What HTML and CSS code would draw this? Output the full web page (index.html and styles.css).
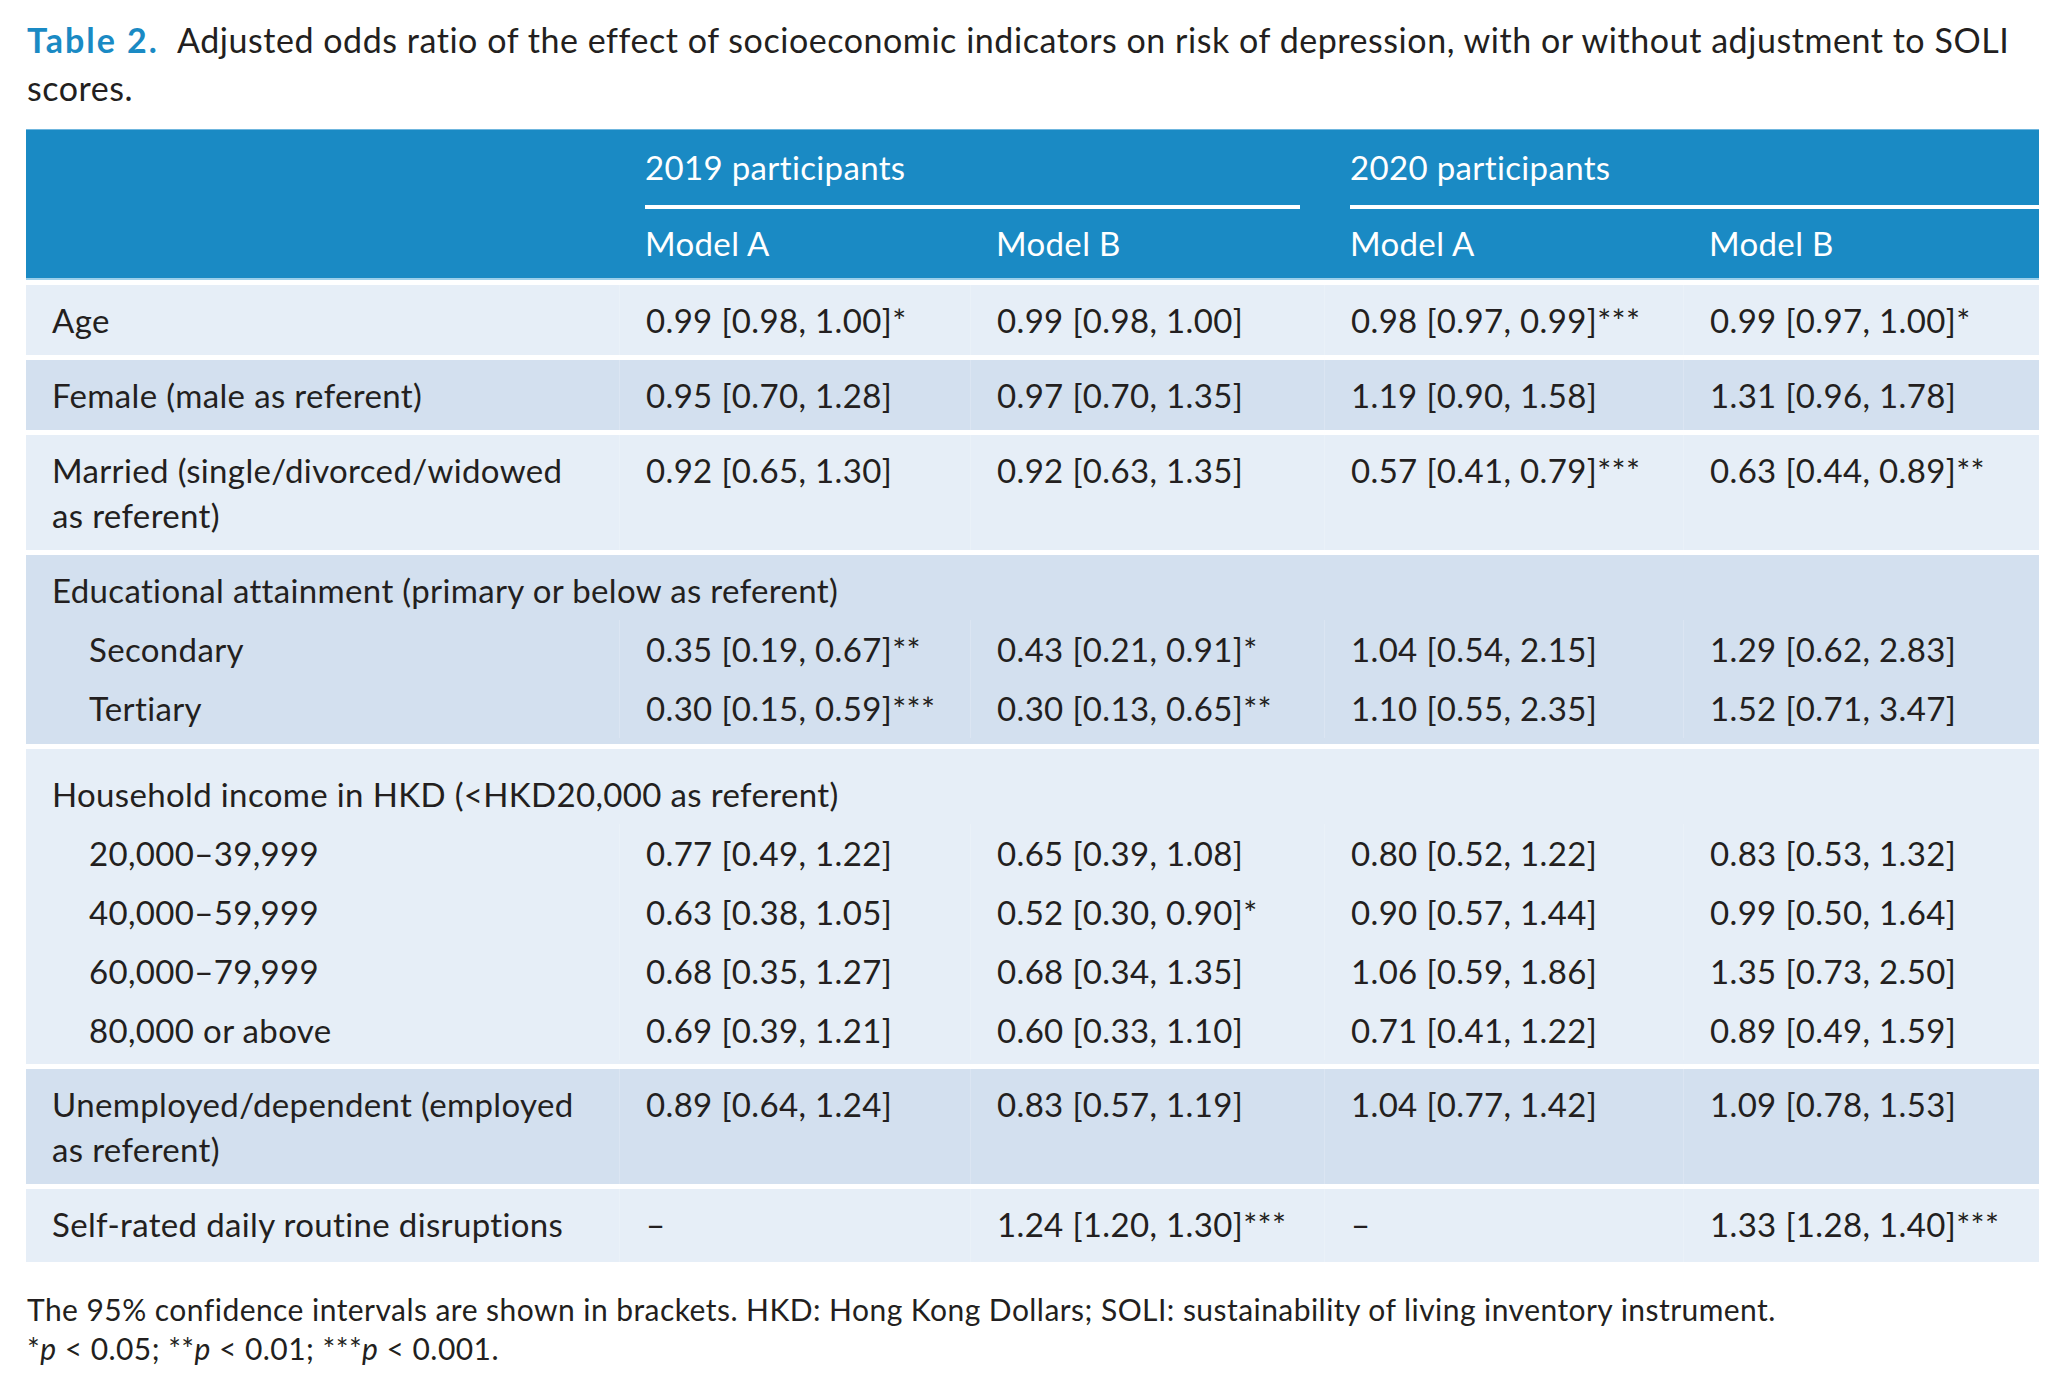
FILE: index.html
```html
<!DOCTYPE html>
<html lang="en">
<head>
<meta charset="utf-8">
<title>Table 2</title>
<link rel="stylesheet" href="styles.css">
</head>
<body>
<div class="page">
  <p class="caption"><span class="cap-label">Table 2.</span> Adjusted odds ratio of the effect of socioeconomic indicators on risk of depression, with or without adjustment to SOLI<br>scores.</p>

  <div class="tbl">
    <div class="thead">
      <div class="hrow hrow-top">
        <div class="hcell"></div>
        <div class="hcell span2 grp-a"><div class="hline">2019 participants</div></div>
        <div class="hcell span2 grp-b"><div class="hline">2020 participants</div></div>
      </div>
      <div class="hrow hrow-bottom">
        <div class="hcell"></div>
        <div class="hcell">Model A</div>
        <div class="hcell">Model B</div>
        <div class="hcell">Model A</div>
        <div class="hcell">Model B</div>
      </div>
    </div>

    <div class="grp light single">
      <div class="row">
        <div class="cell lbl">Age</div>
        <div class="cell">0.99 [0.98, 1.00]*</div>
        <div class="cell">0.99 [0.98, 1.00]</div>
        <div class="cell">0.98 [0.97, 0.99]***</div>
        <div class="cell">0.99 [0.97, 1.00]*</div>
      </div>
    </div>

    <div class="grp dark single">
      <div class="row">
        <div class="cell lbl">Female (male as referent)</div>
        <div class="cell">0.95 [0.70, 1.28]</div>
        <div class="cell">0.97 [0.70, 1.35]</div>
        <div class="cell">1.19 [0.90, 1.58]</div>
        <div class="cell">1.31 [0.96, 1.78]</div>
      </div>
    </div>

    <div class="grp light single">
      <div class="row">
        <div class="cell lbl">Married (single/divorced/widowed<br>as referent)</div>
        <div class="cell">0.92 [0.65, 1.30]</div>
        <div class="cell">0.92 [0.63, 1.35]</div>
        <div class="cell">0.57 [0.41, 0.79]***</div>
        <div class="cell">0.63 [0.44, 0.89]**</div>
      </div>
    </div>

    <div class="grp dark multi edu">
      <div class="row">
        <div class="cell lbl full">Educational attainment (primary or below as referent)</div>
      </div>
      <div class="row">
        <div class="cell lbl sub">Secondary</div>
        <div class="cell">0.35 [0.19, 0.67]**</div>
        <div class="cell">0.43 [0.21, 0.91]*</div>
        <div class="cell">1.04 [0.54, 2.15]</div>
        <div class="cell">1.29 [0.62, 2.83]</div>
      </div>
      <div class="row">
        <div class="cell lbl sub">Tertiary</div>
        <div class="cell">0.30 [0.15, 0.59]***</div>
        <div class="cell">0.30 [0.13, 0.65]**</div>
        <div class="cell">1.10 [0.55, 2.35]</div>
        <div class="cell">1.52 [0.71, 3.47]</div>
      </div>
    </div>

    <div class="grp light multi inc">
      <div class="row">
        <div class="cell lbl full">Household income in HKD (&lt;HKD20,000 as referent)</div>
      </div>
      <div class="row">
        <div class="cell lbl sub">20,000–39,999</div>
        <div class="cell">0.77 [0.49, 1.22]</div>
        <div class="cell">0.65 [0.39, 1.08]</div>
        <div class="cell">0.80 [0.52, 1.22]</div>
        <div class="cell">0.83 [0.53, 1.32]</div>
      </div>
      <div class="row">
        <div class="cell lbl sub">40,000–59,999</div>
        <div class="cell">0.63 [0.38, 1.05]</div>
        <div class="cell">0.52 [0.30, 0.90]*</div>
        <div class="cell">0.90 [0.57, 1.44]</div>
        <div class="cell">0.99 [0.50, 1.64]</div>
      </div>
      <div class="row">
        <div class="cell lbl sub">60,000–79,999</div>
        <div class="cell">0.68 [0.35, 1.27]</div>
        <div class="cell">0.68 [0.34, 1.35]</div>
        <div class="cell">1.06 [0.59, 1.86]</div>
        <div class="cell">1.35 [0.73, 2.50]</div>
      </div>
      <div class="row">
        <div class="cell lbl sub">80,000 or above</div>
        <div class="cell">0.69 [0.39, 1.21]</div>
        <div class="cell">0.60 [0.33, 1.10]</div>
        <div class="cell">0.71 [0.41, 1.22]</div>
        <div class="cell">0.89 [0.49, 1.59]</div>
      </div>
    </div>

    <div class="grp dark single">
      <div class="row">
        <div class="cell lbl">Unemployed/dependent (employed<br>as referent)</div>
        <div class="cell">0.89 [0.64, 1.24]</div>
        <div class="cell">0.83 [0.57, 1.19]</div>
        <div class="cell">1.04 [0.77, 1.42]</div>
        <div class="cell">1.09 [0.78, 1.53]</div>
      </div>
    </div>

    <div class="grp light single last">
      <div class="row">
        <div class="cell lbl">Self-rated daily routine disruptions</div>
        <div class="cell">–</div>
        <div class="cell">1.24 [1.20, 1.30]***</div>
        <div class="cell">–</div>
        <div class="cell">1.33 [1.28, 1.40]***</div>
      </div>
    </div>
  </div>

  <div class="notes">
    <p>The 95% confidence intervals are shown in brackets. HKD: Hong Kong Dollars; SOLI: sustainability of living inventory instrument.</p>
    <p>*<i>p</i> &lt; 0.05; **<i>p</i> &lt; 0.01; ***<i>p</i> &lt; 0.001.</p>
  </div>
</div>
</body>
</html>
```

FILE: styles.css
```css
html, body {
  margin: 0;
  padding: 0;
  background: #ffffff;
}

body {
  font-family: "Lato", "Liberation Sans", sans-serif;
  color: #231f20;
  font-size: 33px;
  letter-spacing: 0.35px;
}

.page {
  padding: 16px 26px 0 26px;
  width: 2013px;
}

.caption {
  margin: 0 0 17px 1px;
  line-height: 48px;
  font-size: 34px;
  letter-spacing: 0.55px;
  white-space: nowrap;
}

.cap-label {
  color: #1a8ac4;
  font-weight: 700;
  letter-spacing: 2px;
  margin-right: 10px;
}

.tbl {
  display: flex;
  flex-direction: column;
  gap: 5px;
}

.thead {
  background: #1a8ac4;
  color: #ffffff;
  border-top: 1px solid #6fb6de;
  border-bottom: 2px solid #9ccfea;
}

.hrow,
.row {
  display: grid;
  grid-template-columns: 593px 351px 354px 359px 356px;
}

.hcell {
  line-height: 45px;
  padding-left: 26px;
}

.hrow-top .hcell {
  padding-top: 15px;
}

.span2 {
  grid-column: span 2;
}

.grp-a {
  padding-right: 24px;
}

.hline {
  border-bottom: 4px solid #ffffff;
  padding-bottom: 15px;
}

.hrow-bottom .hcell {
  padding-top: 12px;
  padding-bottom: 12px;
}

.grp.light {
  background: #e6eef7;
}

.grp.dark {
  background: #d3e0ef;
}

.cell {
  line-height: 45px;
  padding-left: 26px;
  white-space: nowrap;
  border-left: 1px solid rgba(255, 255, 255, 0.18);
}

.cell.lbl {
  border-left: none;
}

.single .cell {
  padding-top: 13px;
  padding-bottom: 12px;
}

.single.last .cell {
  padding-bottom: 15px;
}

.multi .cell {
  padding-top: 7px;
  padding-bottom: 7px;
}

.edu {
  padding-top: 6px;
  padding-bottom: 6px;
}

.inc {
  padding-top: 16px;
  padding-bottom: 4px;
}

.cell.full {
  grid-column: 1 / -1;
}

.cell.sub {
  padding-left: 63px;
}

.notes {
  margin-top: 28px;
  font-size: 30px;
  line-height: 39px;
  letter-spacing: 0.45px;
}

.notes p {
  margin: 0 0 0 1px;
}
```
